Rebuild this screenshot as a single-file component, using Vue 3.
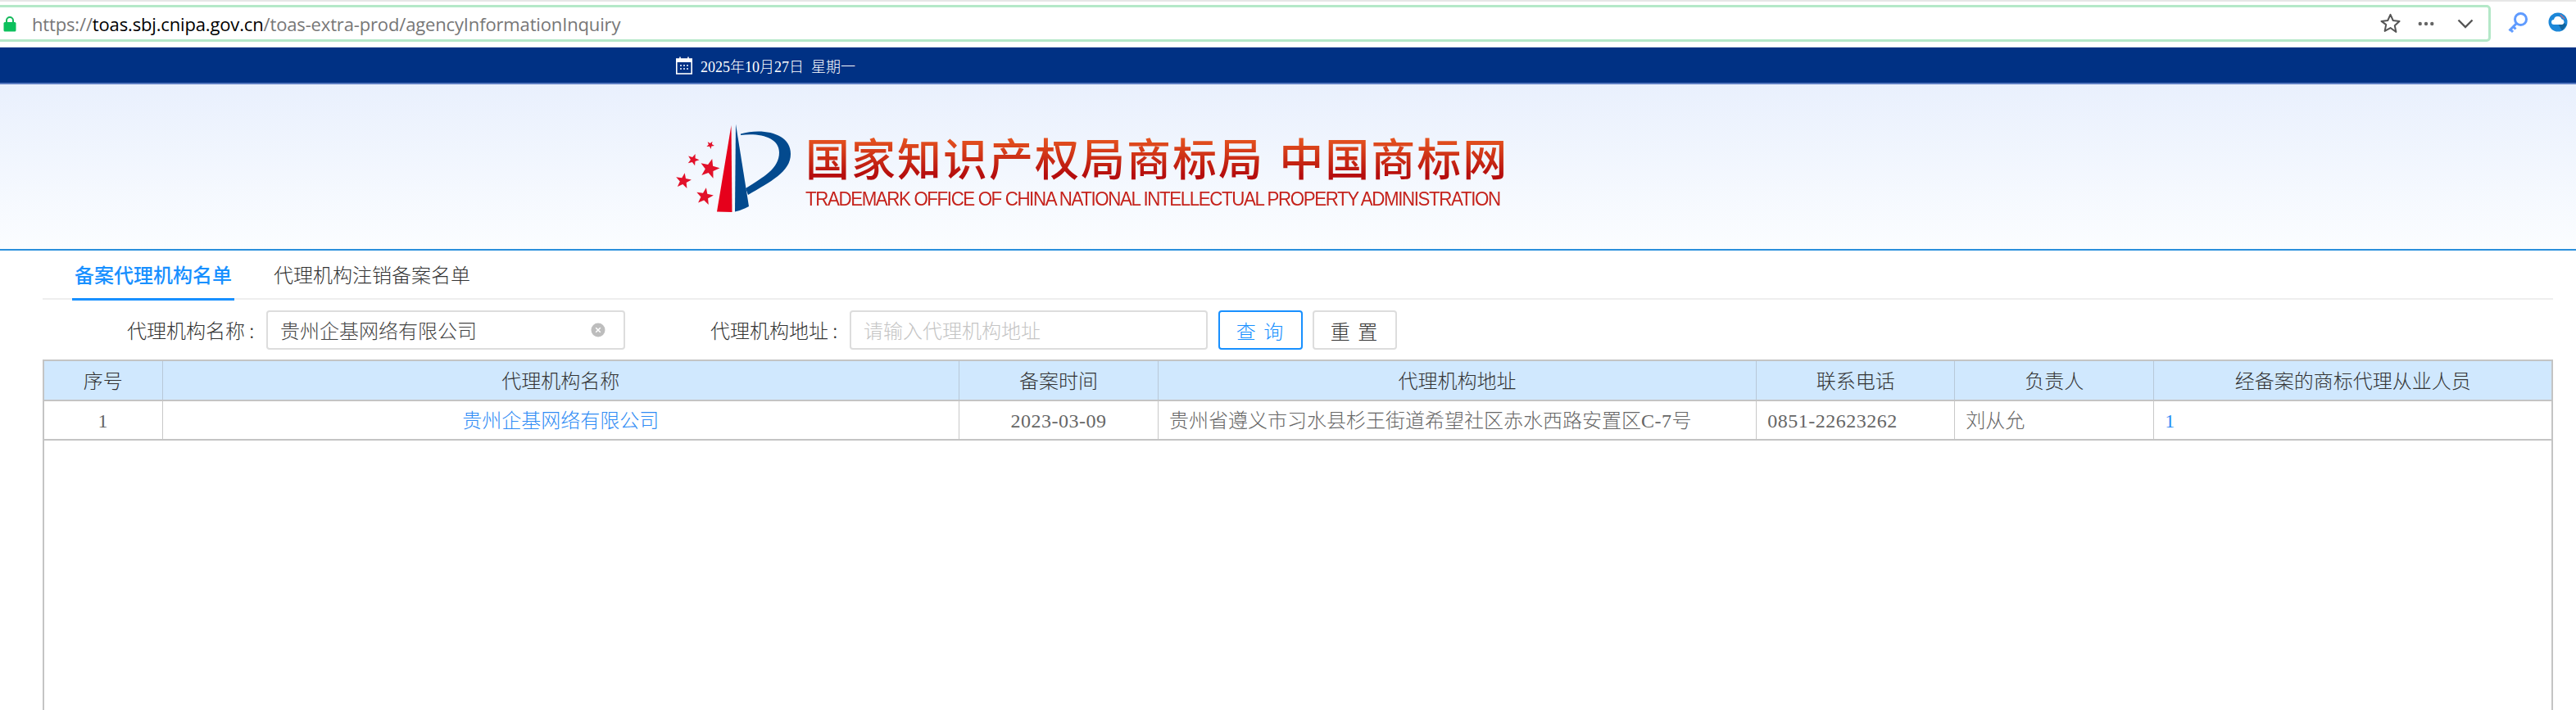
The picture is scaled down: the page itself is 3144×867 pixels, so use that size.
<script setup>
const cols = [
  { title: '序号', width: 144 },
  { title: '代理机构名称', width: 972 },
  { title: '备案时间', width: 243 },
  { title: '代理机构地址', width: 730 },
  { title: '联系电话', width: 242 },
  { title: '负责人', width: 243 },
  { title: '经备案的商标代理从业人员', width: 485 }
]

function segs(text) {
  return text.split(/([0-9A-Za-z-]+)/).filter(Boolean).map((t) => ({
    t,
    latin: /^[0-9A-Za-z-]+$/.test(t)
  }))
}

const row = [
  { text: '1', cls: 'center' },
  { text: '贵州企基网络有限公司', cls: 'center link' },
  { text: '2023-03-09', cls: 'center' },
  { text: '贵州省遵义市习水县杉王街道希望社区赤水西路安置区C-7号', cls: '' },
  { text: '0851-22623262', cls: '' },
  { text: '刘从允', cls: '' },
  { text: '1', cls: 'link' }
].map((c) => ({ ...c, parts: segs(c.text) }))

function starPoints(cx, cy, r, rot) {
  const pts = []
  for (let i = 0; i < 10; i++) {
    const rad = i % 2 ? r * 0.42 : r
    const a = ((rot + i * 36 - 90) * Math.PI) / 180
    pts.push(`${(cx + rad * Math.cos(a)).toFixed(1)},${(cy + rad * Math.sin(a)).toFixed(1)}`)
  }
  return pts.join(' ')
}

const stars = [
  { cx: 57, cy: 37, r: 5, rot: 30 },
  { cx: 36, cy: 55, r: 7.5, rot: 20 },
  { cx: 56, cy: 66, r: 12.5, rot: 15 },
  { cx: 24, cy: 81, r: 10, rot: 10 },
  { cx: 50, cy: 100, r: 11, rot: 10 }
].map((s) => starPoints(s.cx, s.cy, s.r, s.rot))
</script>

<template>
  <div class="page">
    <div class="browser">
      <div class="address">
        <svg class="lock" viewBox="0 0 16 20" width="16" height="20">
          <path d="M4 9V6a4 4 0 0 1 8 0v3" fill="none" stroke="#14b85a" stroke-width="2" />
          <rect x="0.5" y="8" width="15" height="11.5" rx="1.5" fill="#0cc05c" />
        </svg>
        <div class="url"><span class="dim">https://</span><span class="host">toas.sbj.cnipa.gov.cn</span><span class="dim">/toas-extra-prod/agencyInformationInquiry</span></div>
        <svg class="tool star" viewBox="0 0 24 24" width="27" height="27">
          <path d="M12 2.5l2.9 6.4 6.9.8-5.1 4.7 1.4 6.9L12 16.9l-6.1 3.4 1.4-6.9L2.2 9.7l6.9-.8z" fill="none" stroke="#555" stroke-width="1.8" stroke-linejoin="round" />
        </svg>
        <svg class="tool dots" viewBox="0 0 22 6" width="20" height="6">
          <circle cx="3" cy="3" r="2.4" fill="#666" /><circle cx="11" cy="3" r="2.4" fill="#666" /><circle cx="19" cy="3" r="2.4" fill="#666" />
        </svg>
        <svg class="tool chev" viewBox="0 0 20 12" width="20" height="12">
          <path d="M1.5 1.5L10 10l8.500-8.500" fill="none" stroke="#555" stroke-width="2.400" />
        </svg>
      </div>
      <svg class="key" viewBox="0 0 26 26" width="26" height="26">
        <circle cx="16.500" cy="9.500" r="7" fill="none" stroke="#5f9bff" stroke-width="3" />
        <path d="M11.500 14.500L2.500 23.500M4 22l3 3M7.500 18.500l3 3" fill="none" stroke="#5f9bff" stroke-width="3" />
      </svg>
      <svg class="cloud" viewBox="0 0 24 24" width="24" height="24">
        <circle cx="12" cy="12" r="11.500" fill="#1c87d8" />
        <path d="M12 14l5 8.500 5.500-7-3-2.500z" fill="#12659f" />
        <path d="M7 15a3 3 0 0 1 0-6 5 5 0 0 1 9.500-.8A3.500 3.500 0 0 1 17 15z" fill="#fff" />
        <path d="M15 3l5 5" stroke="#b4708c" stroke-width="1.500" fill="none" />
      </svg>
    </div>

    <div class="topbar">
      <svg class="cal" viewBox="0 0 20 22" width="20" height="22">
        <rect x="0.800" y="3" width="18.400" height="18" fill="none" stroke="#fff" stroke-width="1.600" />
        <rect x="0.800" y="3" width="18.400" height="4" fill="#fff" />
        <path d="M5 0.500v4M15 0.500v4" stroke="#fff" stroke-width="1.600" />
        <g fill="#b9c8e6">
          <rect x="5" y="10" width="2" height="2" /><rect x="9" y="10" width="2" height="2" /><rect x="13" y="10" width="2" height="2" />
          <rect x="5" y="14" width="2" height="2" /><rect x="9" y="14" width="2" height="2" /><rect x="13" y="14" width="2" height="2" />
        </g>
      </svg>
      <span class="date">2025<i>年</i>10<i>月</i>27<i>日</i>&nbsp;&nbsp;<i>星期一</i></span>
    </div>

    <header class="banner">
      <svg class="emblem" viewBox="0 0 176 130" width="176" height="130">
        <polygon v-for="(p, i) in stars" :key="i" :points="p" fill="#e2112a" />
        <path d="M82.500 13L83.500 119L65 118.500Z" fill="#e6001b" />
        <path d="M88 11.500L104 112Q96 116.500 87 118.500Z" fill="#034a8e" />
        <path d="M94 23.500C120 16 155 22 155 48C155 70 130 82 103 98L100 90C122 76 141 66 141 46C141 28 118 22 94 25Z" fill="#034a8e" />
      </svg>
      <div class="brand">
        <div class="brand-cn">国家知识产权局商标局 中国商标网</div>
        <div class="brand-en">TRADEMARK OFFICE OF CHINA NATIONAL INTELLECTUAL PROPERTY ADMINISTRATION</div>
      </div>
    </header>

    <main class="content">
      <nav class="tabs">
        <a class="tab active">备案代理机构名单</a>
        <a class="tab">代理机构注销备案名单</a>
      </nav>

      <form class="filters" @submit.prevent>
        <label class="label first">代理机构名称 :</label>
        <div class="input wide">
          <span class="value">贵州企基网络有限公司</span>
          <svg class="clear" viewBox="0 0 18 18" width="18" height="18">
            <circle cx="9" cy="9" r="8.500" fill="#bdbdbd" />
            <path d="M6.200 6.200l5.600 5.600M11.800 6.200l-5.600 5.600" stroke="#fff" stroke-width="1.500" />
          </svg>
        </div>
        <label class="label second">代理机构地址 :</label>
        <div class="input">
          <span class="placeholder">请输入代理机构地址</span>
        </div>
        <button class="btn primary" type="button">查 询</button>
        <button class="btn" type="button">重 置</button>
      </form>

      <section class="grid">
        <table>
          <colgroup>
            <col v-for="c in cols" :key="c.title" :style="{ width: c.width + 'px' }" />
          </colgroup>
          <thead>
            <tr>
              <th v-for="c in cols" :key="c.title">{{ c.title }}</th>
            </tr>
          </thead>
          <tbody>
            <tr>
              <td v-for="(c, i) in row" :key="i" :class="c.cls">
                <span v-for="(s, j) in c.parts" :key="j" :class="{ latin: s.latin }">{{ s.t }}</span>
              </td>
            </tr>
          </tbody>
        </table>
      </section>
    </main>
  </div>
</template>

<style scoped>
.page {
  width: 3144px;
  height: 867px;
  overflow: hidden;
  background: #fff;
  font-family: "Noto Sans CJK SC", sans-serif;
  font-weight: 300;
  font-size: 24px;
  color: #333;
  display: flex;
  flex-direction: column;
}
.browser {
  height: 57px;
  box-sizing: border-box;
  border-top: 2px solid #e6e6e6;
  background: #fff;
  display: flex;
  align-items: flex-start;
  flex: none;
}
.address {
  margin: 4px 0 0 -6px;
  width: 3046px;
  height: 45px;
  box-sizing: border-box;
  border: 3px solid #b4e8c8;
  border-radius: 5px;
  display: flex;
  align-items: center;
  padding-left: 7px;
}
.lock {
  flex: none;
}
.url {
  margin-left: 19px;
  flex: 1;
  font-family: "Open Sans", sans-serif;
  font-weight: 400;
  font-size: 22px;
  letter-spacing: -0.15px;
  white-space: nowrap;
}
.dim {
  color: #777;
}
.host {
  color: #000;
}
.tool {
  flex: none;
}
.star {
  margin-right: 20px;
}
.dots {
  margin-right: 28px;
}
.chev {
  margin-right: 18px;
}
.key {
  margin: 12px 0 0 20px;
  flex: none;
}
.cloud {
  margin: 13px 0 0 24px;
  flex: none;
}
.topbar {
  height: 46px;
  flex: none;
  background: #003184;
  box-sizing: border-box;
  border-top: 1px solid #dfe4ee;
  border-bottom: 2px solid #5a7bc0;
  display: flex;
  align-items: center;
  padding-left: 825px;
}
.date {
  margin-left: 10px;
  color: #fff;
  font-family: "Liberation Serif", serif;
  font-size: 18px;
  font-weight: 400;
  white-space: nowrap;
}
.date i {
  font-style: normal;
  font-family: "Noto Sans CJK SC", sans-serif;
  font-weight: 300;
}
.banner {
  height: 203px;
  flex: none;
  box-sizing: border-box;
  background: linear-gradient(180deg, #e9f0fd 0%, #fbfdff 100%);
  border-bottom: 2px solid #2a8fdc;
  display: flex;
  align-items: flex-start;
  padding: 37px 0 0 810px;
}
.emblem {
  flex: none;
}
.brand {
  margin: 21px 0 0 -3px;
  white-space: nowrap;
}
.brand-cn {
  font-size: 54px;
  font-weight: 500;
  line-height: 62px;
  letter-spacing: 2px;
  word-spacing: 4px;
  background: linear-gradient(180deg, #e4521f 15%, #b50d0d 85%);
  -webkit-background-clip: text;
  background-clip: text;
  color: transparent;
}
.brand-en {
  margin-top: 6px;
  font-family: "Liberation Sans", sans-serif;
  font-weight: 400;
  font-size: 24px;
  line-height: 28px;
  letter-spacing: -1.500px;
  color: #c5231c;
  transform: scaleX(0.93);
  transform-origin: left center;
}
.content {
  flex: 1;
  min-height: 0;
  display: flex;
  flex-direction: column;
  padding: 0 28px 0 52px;
}
.tabs {
  height: 60px;
  flex: none;
  box-sizing: border-box;
  border-bottom: 2px solid #eee;
  display: flex;
  gap: 45px;
  padding-left: 36px;
}
.tab {
  display: flex;
  align-items: center;
  height: 61px;
  box-sizing: border-box;
  padding: 0 3px 1px;
  border-bottom: 3px solid transparent;
  font-size: 24px;
  color: #333;
  white-space: nowrap;
}
.tab.active {
  color: #1890ff;
  font-weight: 500;
  border-bottom-color: #1890ff;
}
.filters {
  height: 48px;
  flex: none;
  margin-top: 13px;
  display: flex;
  align-items: stretch;
}
.label {
  display: flex;
  align-items: center;
  box-sizing: border-box;
  padding-bottom: 2px;
  white-space: pre;
  color: #333;
  width: 170px;
}
.label.first {
  margin-left: 103px;
}
.label.second {
  margin-left: 104px;
}
.input {
  width: 437px;
  box-sizing: border-box;
  border: 2px solid #ddd;
  border-radius: 4px;
  display: flex;
  align-items: center;
  justify-content: space-between;
  padding: 0 22px 2px 15px;
  white-space: nowrap;
}
.input.wide {
  width: 438px;
}
.value {
  color: #444;
}
.placeholder {
  color: #c4c4c4;
}
.clear {
  flex: none;
  margin-top: 2px;
}
.btn {
  width: 103px;
  margin-left: 13px;
  padding: 0;
  box-sizing: border-box;
  border: 2px solid #ddd;
  border-radius: 4px;
  background: #fff;
  font: inherit;
  color: #333;
  letter-spacing: 2px;
}
.btn.primary {
  border-color: #1890ff;
  color: #1890ff;
}
.btn.primary + .btn {
  margin-left: 12px;
}
.grid {
  margin-top: 12px;
  flex: 1;
  min-height: 0;
  box-sizing: border-box;
  border: 2px solid #c4c4c4;
  border-bottom: none;
}
table {
  width: 3060px;
  table-layout: fixed;
  border-collapse: collapse;
}
th,
td {
  height: 48px;
  box-sizing: border-box;
  padding: 0 13px 3px;
  font-size: 24px;
  font-weight: 300;
  white-space: nowrap;
  overflow: hidden;
  border-right: 1px solid #c8c8c8;
  border-bottom: 2px solid #c4c4c4;
}
th:last-child,
td:last-child {
  border-right: none;
}
th {
  background: #d0e8fe;
  color: #333;
  text-align: center;
  border-right-color: #b8c8d8;
}
td {
  color: #666;
}
.center {
  text-align: center;
}
.link {
  color: #2f8cf5;
}
.latin {
  font-family: "Liberation Serif", serif;
  font-size: 24px;
  font-weight: 400;
  letter-spacing: 0.5px;
}
</style>

<style>
html,
body {
  margin: 0;
  background: #fff;
}
</style>
